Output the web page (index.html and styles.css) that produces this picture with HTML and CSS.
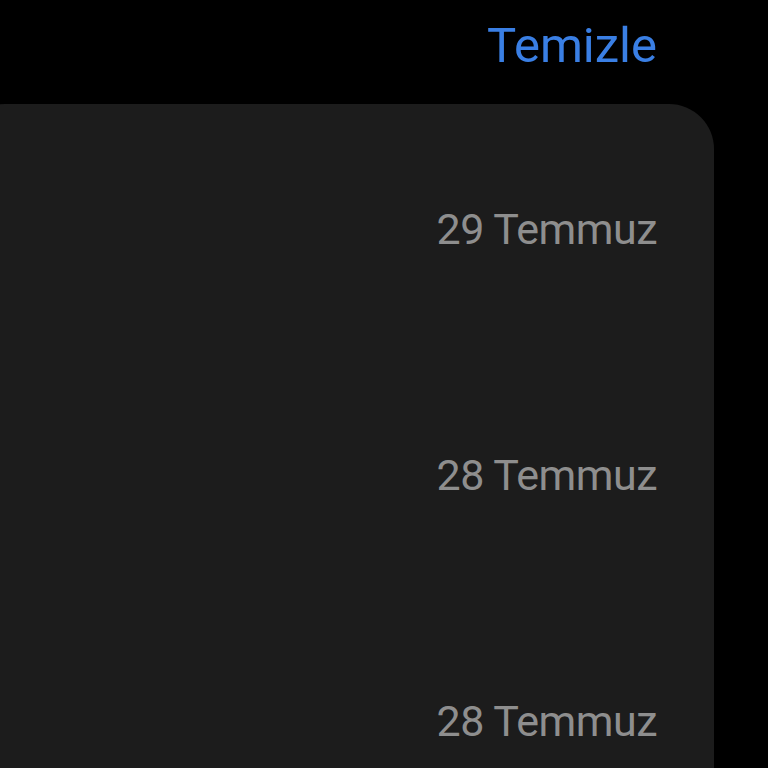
FILE: index.html
```html
<!DOCTYPE html>
<html lang="tr">
<head>
<meta charset="utf-8">
<link rel="stylesheet" href="styles.css">
</head>
<body>
<header class="topbar">
  <span class="clear-btn">Temizle</span>
</header>
<main class="list-wrap">
  <section class="card">
    <div class="row"><span class="date">29 Temmuz</span></div>
    <div class="row"><span class="date">28 Temmuz</span></div>
    <div class="row"><span class="date">28 Temmuz</span></div>
  </section>
</main>
</body>
</html>
```
FILE: styles.css
```css
html, body {
  margin: 0;
  padding: 0;
  background: #000;
  height: 768px;
  overflow: hidden;
  font-family: Roboto, "Noto Sans", sans-serif;
}
.topbar {
  height: 104px;
  box-sizing: border-box;
  padding: 21px 111px 0 0;
  display: flex;
  justify-content: flex-end;
}
.clear-btn {
  color: #3a7fe4;
  font-size: 49px;
  line-height: 1;
}
.list-wrap {
  display: flex;
  align-items: flex-start;
  height: 664px;
  overflow: hidden;
}
.card {
  flex: none;
  margin-left: -40px;
  width: 754px;
  background: #1c1c1c;
  border-radius: 45px;
}
.row {
  height: 246px;
  box-sizing: border-box;
  padding: 104px 57px 0 0;
  display: flex;
  justify-content: flex-end;
}
.date {
  color: #8e8e8e;
  font-size: 43px;
  line-height: 1;
  letter-spacing: -0.5px;
}
```
